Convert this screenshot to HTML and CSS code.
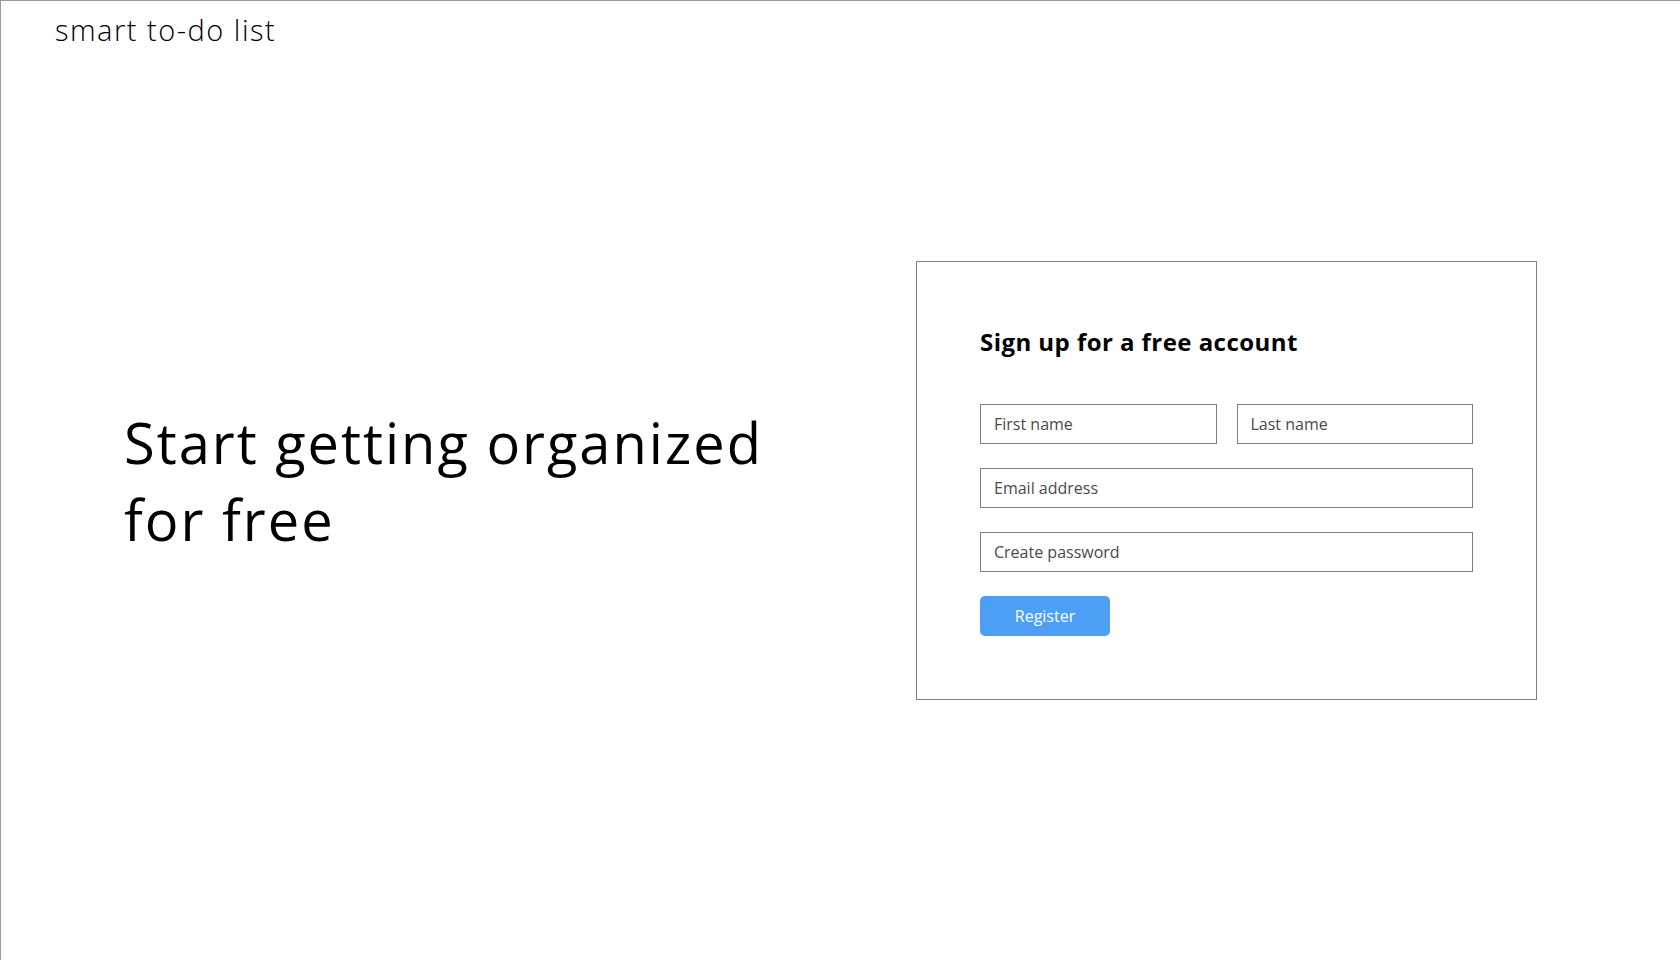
FILE: index.html
```html
<!DOCTYPE html>
<html lang="en">
<head>
<meta charset="utf-8">
<title>smart to-do list</title>
<link rel="stylesheet" href="styles.css">
</head>
<body>
<div class="page">
  <header class="header">
    <div class="logo">smart to-do list</div>
  </header>
  <main class="main">
    <h1 class="headline">Start getting organized<br>for free</h1>
    <form class="card">
      <h2 class="card-title">Sign up for a free account</h2>
      <div class="fields">
        <div class="row-2">
          <input class="field" type="text" placeholder="First name">
          <input class="field" type="text" placeholder="Last name">
        </div>
        <input class="field" type="email" placeholder="Email address">
        <input class="field" type="password" placeholder="Create password">
        <div><button class="btn" type="button">Register</button></div>
      </div>
    </form>
  </main>
</div>
</body>
</html>
```
FILE: styles.css
```css
html, body {
  margin: 0;
  padding: 0;
  background: #fff;
}
body {
  font-family: "Open Sans", "Liberation Sans", sans-serif;
  color: #000;
}
.page {
  height: 100vh;
  box-sizing: border-box;
  border-top: 1px solid #9a9a9a;
  border-left: 1px solid #9a9a9a;
  display: flex;
  flex-direction: column;
}
.header {
  height: 59px;
  padding-left: 54px;
  box-sizing: border-box;
}
.logo {
  font-family: "Open Sans", sans-serif;
  font-weight: 300;
  font-size: 29px;
  line-height: 30px;
  padding-top: 14px;
  letter-spacing: 1.5px;
  color: #000;
}
.main {
  flex: 1;
  display: flex;
  align-items: center;
  justify-content: space-between;
  padding: 0 143px 59px 123px;
}
.headline {
  margin: 0;
  font-weight: 400;
  font-size: 56px;
  line-height: 77px;
  letter-spacing: 2px;
  color: #000;
}
.card {
  width: 621px;
  box-sizing: border-box;
  border: 1px solid #808080;
  padding: 64px 63px 63px 63px;
}
.card-title {
  margin: 0 0 46px;
  font-size: 24px;
  line-height: 32px;
  font-weight: 700;
  letter-spacing: 0.45px;
}
.fields {
  display: grid;
  gap: 24px;
}
.row-2 {
  display: grid;
  grid-template-columns: 1fr 1fr;
  gap: 20px;
}
.field {
  display: block;
  width: 100%;
  height: 40px;
  box-sizing: border-box;
  border: 1px solid #808080;
  border-radius: 0;
  padding: 0 13px;
  font-family: "Open Sans", sans-serif;
  font-size: 16px;
  color: #333;
  outline: none;
  background: #fff;
}
.field::placeholder {
  color: #4a4a4a;
  opacity: 1;
}
.btn {
  width: 130px;
  height: 40px;
  border: none;
  border-radius: 5px;
  background: #4c9ff4;
  color: #fff;
  font-family: "Open Sans", sans-serif;
  font-size: 16px;
  cursor: pointer;
}
```
